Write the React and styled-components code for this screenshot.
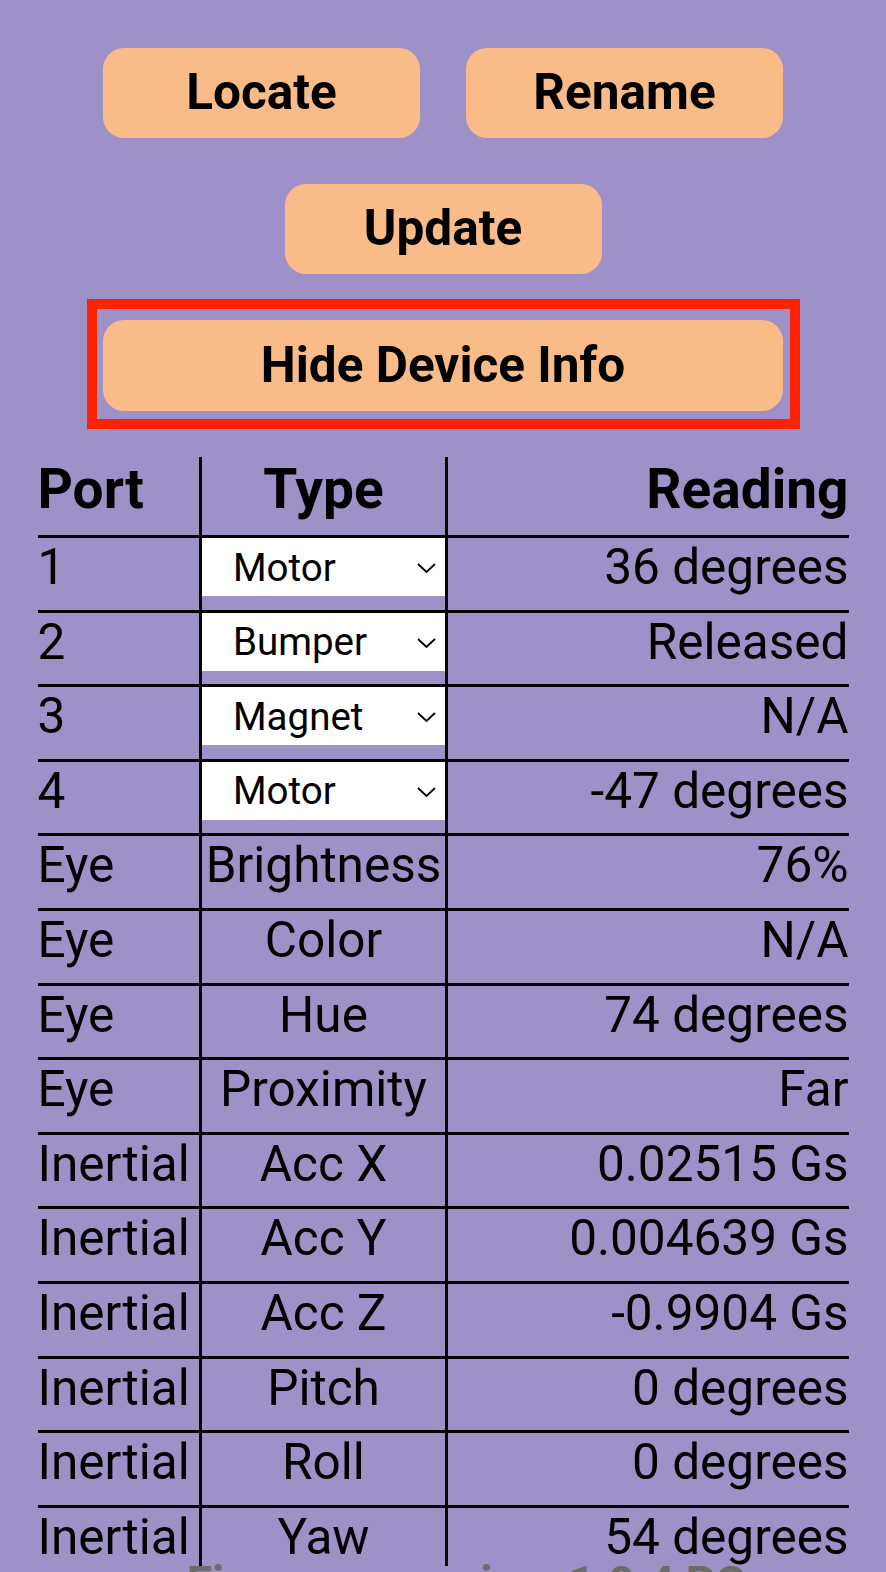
import React from "react";
import styled, { createGlobalStyle } from "styled-components";

const Global = createGlobalStyle`
  * { box-sizing: border-box; }
  html, body {
    margin: 0;
    padding: 0;
    background: #9e91c8;
    font-family: Roboto, "Liberation Sans", Arial, sans-serif;
    color: #000;
  }
`;

const Page = styled.div`
  width: 886px;
  padding-top: 48px;
  display: flex;
  flex-direction: column;
  align-items: center;
  gap: 46px;
`;

const ButtonRow = styled.div`
  display: flex;
  justify-content: center;
  gap: 46px;
`;

const ActionButton = styled.button`
  width: ${(p) => (p.$wide ? "680px" : "317px")};
  height: ${(p) => (p.$wide ? "91px" : "90px")};
  border: none;
  border-radius: 21px;
  background: #f9bc88;
  color: #000;
  font-family: Roboto, "Liberation Sans", Arial, sans-serif;
  font-weight: 700;
  font-size: 49.5px;
  line-height: 1;
  padding: 0;
  cursor: pointer;
`;

const Highlight = styled.div`
  position: relative;
  display: flex;

  &::after {
    content: "";
    position: absolute;
    left: -16px;
    right: -17px;
    top: -21px;
    bottom: -18px;
    border: 10px solid #ff2200;
    pointer-events: none;
  }
`;

const Table = styled.table`
  width: 811px;
  table-layout: fixed;
  border-collapse: separate;
  border-spacing: 0;
  font-family: Roboto, "Liberation Sans", Arial, sans-serif;
`;

const alignFor = (a) => (a === "center" ? "center" : a === "right" ? "right" : "left");

const HeadCell = styled.th`
  width: ${(p) => p.$w}px;
  font-size: 55px;
  font-weight: 700;
  line-height: 64.5px;
  padding: 0 0 13.5px 0;
  text-align: ${(p) => alignFor(p.$align)};
  border-bottom: 3px solid #000;
  border-left: ${(p) => (p.$mid ? "3px solid #000" : "none")};
  border-right: ${(p) => (p.$mid ? "3px solid #000" : "none")};
  vertical-align: top;
  white-space: nowrap;
`;

const Cell = styled.td`
  font-size: 49.5px;
  font-weight: 400;
  line-height: 58px;
  padding: 0 0 13.6px 0;
  text-align: ${(p) => alignFor(p.$align)};
  border-bottom: 3px solid #000;
  border-left: ${(p) => (p.$mid ? "3px solid #000" : "none")};
  border-right: ${(p) => (p.$mid ? "3px solid #000" : "none")};
  vertical-align: top;
  white-space: nowrap;
  overflow: visible;

  tr:last-child > & {
    border-bottom: none;
    padding-bottom: 0;
  }
`;

const SelectWrap = styled.div`
  position: relative;
  height: 58px;
  background: #fff;
`;

const TypeSelect = styled.select`
  appearance: none;
  -webkit-appearance: none;
  display: block;
  width: 100%;
  height: 58px;
  border: none;
  border-radius: 0;
  background: #fff;
  color: #000;
  font-family: Roboto, "Liberation Sans", Arial, sans-serif;
  font-size: 38.5px;
  padding: 0 0 0 31px;
  margin: 0;
  outline: none;
`;

const Chevron = styled.svg`
  position: absolute;
  right: 9px;
  top: 25px;
  width: 19px;
  height: 10px;
  pointer-events: none;
`;

const Footer = styled.div`
  width: 886px;
  margin-top: -56px;
  padding-left: 46px;
  text-align: center;
  font-family: Roboto, "Liberation Sans", Arial, sans-serif;
  font-weight: 700;
  font-size: 46px;
  color: #6c6c6c;
  white-space: nowrap;
`;

const ports = [
  { port: "1", type: "Motor", reading: "36 degrees" },
  { port: "2", type: "Bumper", reading: "Released" },
  { port: "3", type: "Magnet", reading: "N/A" },
  { port: "4", type: "Motor", reading: "-47 degrees" },
];

const sensors = [
  ["Eye", "Brightness", "76%"],
  ["Eye", "Color", "N/A"],
  ["Eye", "Hue", "74 degrees"],
  ["Eye", "Proximity", "Far"],
  ["Inertial", "Acc X", "0.02515 Gs"],
  ["Inertial", "Acc Y", "0.004639 Gs"],
  ["Inertial", "Acc Z", "-0.9904 Gs"],
  ["Inertial", "Pitch", "0 degrees"],
  ["Inertial", "Roll", "0 degrees"],
  ["Inertial", "Yaw", "54 degrees"],
];

const deviceTypes = ["Motor", "Bumper", "Magnet", "Eye", "Inertial"];

function TypePicker({ value }) {
  return (
    <SelectWrap>
      <TypeSelect defaultValue={value}>
        {deviceTypes.map((t) => (
          <option key={t} value={t}>
            {t}
          </option>
        ))}
      </TypeSelect>
      <Chevron viewBox="0 0 19 10" fill="none">
        <path d="M1 1 L9.5 9 L18 1" stroke="#000" strokeWidth="1.8" />
      </Chevron>
    </SelectWrap>
  );
}

export default function App() {
  return (
    <>
      <Global />
      <Page>
        <ButtonRow>
          <ActionButton>Locate</ActionButton>
          <ActionButton>Rename</ActionButton>
        </ButtonRow>
        <ButtonRow>
          <ActionButton>Update</ActionButton>
        </ButtonRow>
        <Highlight>
          <ActionButton $wide>Hide Device Info</ActionButton>
        </Highlight>
        <Table>
          <thead>
            <tr>
              <HeadCell $w={161.5} $align="left">Port</HeadCell>
              <HeadCell $w={249} $align="center" $mid>Type</HeadCell>
              <HeadCell $w={400.5} $align="right">Reading</HeadCell>
            </tr>
          </thead>
          <tbody>
            {ports.map((r) => (
              <tr key={r.port}>
                <Cell $align="left">{r.port}</Cell>
                <Cell $align="center" $mid>
                  <TypePicker value={r.type} />
                </Cell>
                <Cell $align="right">{r.reading}</Cell>
              </tr>
            ))}
            {sensors.map(([p, t, v]) => (
              <tr key={t}>
                <Cell $align="left">{p}</Cell>
                <Cell $align="center" $mid>{t}</Cell>
                <Cell $align="right">{v}</Cell>
              </tr>
            ))}
          </tbody>
        </Table>
        <Footer>Firmware version: 1.0.4 RC</Footer>
      </Page>
    </>
  );
}
